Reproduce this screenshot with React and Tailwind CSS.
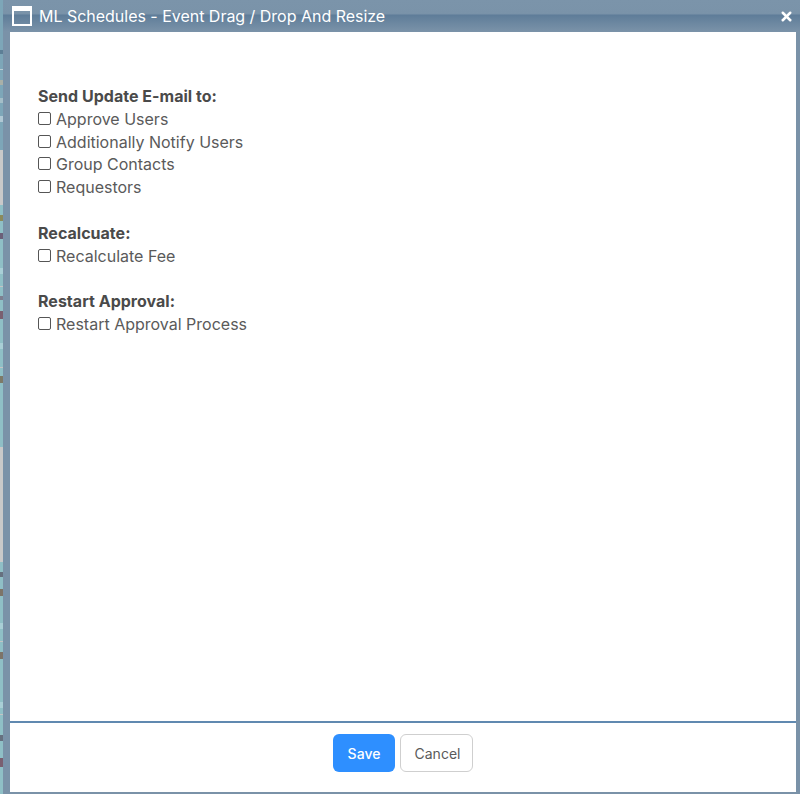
import { X } from 'lucide-react';

const sendOptions = ['Approve Users', 'Additionally Notify Users', 'Group Contacts', 'Requestors'];

// bits of the page that stick out left of the dialog
const topMarks = [
  'mt-[50px] h-[4px] bg-[#5d7f96]',
  'mt-[15px] h-[1px] bg-[#b8ccd4]',
  'mt-[10px] h-[5px] bg-[#a9b0a8]',
  'mt-[13px] h-[5px] bg-[#a4bec8]',
  'mt-[13px] h-[6px] bg-[#b0c8d4]',
];
const midMarks = [
  'mt-[10px] h-[6px] bg-[#8b8a5c]',
  'mt-[12px] h-[6px] bg-[#6b5f78]',
  'mt-[29px] h-[6px] bg-[#a9cfd6]',
  'mt-[12px] h-[1px] bg-[#c4c4c4]',
  'mt-[9px] h-[4px] bg-[#7d7f8f]',
  'mt-[11px] h-[8px] bg-[#7a5f70]',
  'mt-[24px] h-[6px] bg-[#a9cfd6]',
  'mt-[18px] h-[1px] bg-[#c4c4c4]',
  'mt-[8px] h-[7px] bg-[#7d7a68]',
];
const lowMarks = [
  'mt-[10px] h-[5px] bg-[#66707f]',
  'mt-[12px] h-[7px] bg-[#7d7468]',
  'mt-[27px] h-[6px] bg-[#a9cfd6]',
  'mt-[12px] h-[1px] bg-[#c4c4c4]',
  'mt-[10px] h-[7px] bg-[#7d7468]',
  'mt-[43px] h-[6px] bg-[#a9cfd6]',
  'mt-[6px] h-[1px] bg-[#c4c4c4]',
  'mt-[20px] h-[6px] bg-[#66707f]',
  'mt-[17px] h-[9px] bg-[#7a5f70]',
];

function Option({ label }) {
  return (
    <label className="flex items-center h-[22.8px] text-[16px] text-[#5a5a5a]">
      <input type="checkbox" className="appearance-none w-[13px] h-[13px] ml-0 mr-[5px] mb-[1px] border border-[#555] rounded-[2px] bg-white" />
      <span>{label}</span>
    </label>
  );
}

function Section({ title, options, className }) {
  return (
    <div className={className}>
      <div className="h-[22.8px] leading-[22.8px] text-[16px] font-bold tracking-[0.02px] text-[#4a4a4a]">{title}</div>
      {options.map((o) => <Option key={o} label={o} />)}
    </div>
  );
}

export default function App() {
  return (
    <div className="flex w-[800px] h-[794px] overflow-hidden bg-[#8fbfc6] font-['Inter',sans-serif]">
      {/* page behind the dialog */}
      <div className="w-[3px] shrink-0 flex flex-col">
        <div className="h-[150px] bg-[#7da6b8]">
          {topMarks.map((m) => <div key={m} className={m} />)}
        </div>
        <div className="h-[55px] bg-[#c9c9c9]" />
        <div className="h-[242px]">
          {midMarks.map((m) => <div key={m} className={m} />)}
        </div>
        <div className="h-[115px] bg-[#c9c9c9]" />
        <div className="flex-1">
          {lowMarks.map((m) => <div key={m} className={m} />)}
        </div>
      </div>

      <div className="flex-1 flex flex-col bg-[#7a92a8]">
        <div className="h-[32px] shrink-0 flex items-center pl-[9px] pr-[6px] bg-[linear-gradient(#7b94aa_0%,#7a93a9_42%,#5f7d99_48%,#7b93a9_100%)]">
          <div className="w-[20px] h-[20px] border-2 border-white border-t-[5px] shrink-0" />
          <span className="ml-[7px] text-[16px] tracking-[-0.02px] text-white">ML Schedules - Event Drag / Drop And Resize</span>
          <X className="ml-auto w-[15px] h-[15px] text-white" strokeWidth={4} />
        </div>

        <div className="flex-1 flex flex-col ml-[7px] mr-[4px] mb-[2px] bg-white">
          <div className="flex-1 pl-[28px] pt-[52.7px]">
            <Section title="Send Update E-mail to:" options={sendOptions} />
            <Section title="Recalcuate:" options={['Recalculate Fee']} className="mt-[23px]" />
            <Section title="Restart Approval:" options={['Restart Approval Process']} className="mt-[22.6px]" />
          </div>
          <div className="h-[71px] shrink-0 border-t-2 border-[#6089b0] flex justify-center pt-[11px] gap-[5px] pr-[1px]">
            <button className="w-[62px] h-[38px] pl-[1px] rounded-[6px] bg-[#2e8fff] text-white text-[14px] font-medium">Save</button>
            <button className="w-[73px] h-[38px] pl-[3px] rounded-[6px] border border-[#cfcfcf] bg-white text-[#5a5a5a] text-[14px]">Cancel</button>
          </div>
        </div>
      </div>
    </div>
  );
}
